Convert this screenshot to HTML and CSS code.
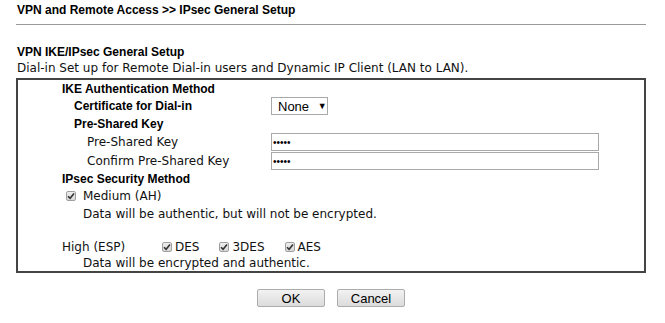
FILE: index.html
```html
<!DOCTYPE html>
<html lang="en">
<head>
    <meta charset="UTF-8">
    <title>IPsec General Setup</title>
    <link rel="stylesheet" href="styles.css">
</head>
<body>
    <div class="page">
        <h1 class="title">VPN and Remote Access &gt;&gt; IPsec General Setup</h1>

        <h2 class="section-title">VPN IKE/IPsec General Setup</h2>
        <div class="desc">Dial-in Set up for Remote Dial-in users and Dynamic IP Client (LAN to LAN).</div>

        <div class="box">
            <div class="row h17"><span class="label l1 bold">IKE Authentication Method</span></div>
            <div class="row h18">
                <span class="label l2 bold">Certificate for Dial-in</span>
                <div class="select">None <span class="arrow">&#9660;</span></div>
            </div>
            <div class="row h18"><span class="label l2 bold">Pre-Shared Key</span></div>
            <div class="row h19 top">
                <span class="label l3">Pre-Shared Key</span>
                <input class="key" type="password" value="12345">
            </div>
            <div class="row h18 top">
                <span class="label l3">Confirm Pre-Shared Key</span>
                <input class="key" type="password" value="12345">
            </div>
            <div class="row h17"><span class="label l1 bold">IPsec Security Method</span></div>
            <div class="row h18 medium">
                <span class="check"><svg width="8" height="8" viewBox="0 0 8 8"><path d="M1 4.2 L3.1 6.3 L7 1.6" fill="none" stroke="#333" stroke-width="1.6"/></svg></span>
                <span>Medium (AH)</span>
            </div>
            <div class="row h17 note">Data will be authentic, but will not be encrypted.</div>
            <div class="row h16"></div>
            <div class="row h17 high">
                <span class="high-label">High (ESP)</span>
                <span class="opt"><span class="check"><svg width="8" height="8" viewBox="0 0 8 8"><path d="M1 4.2 L3.1 6.3 L7 1.6" fill="none" stroke="#333" stroke-width="1.6"/></svg></span>DES</span>
                <span class="opt"><span class="check"><svg width="8" height="8" viewBox="0 0 8 8"><path d="M1 4.2 L3.1 6.3 L7 1.6" fill="none" stroke="#333" stroke-width="1.6"/></svg></span>3DES</span>
                <span class="opt"><span class="check"><svg width="8" height="8" viewBox="0 0 8 8"><path d="M1 4.2 L3.1 6.3 L7 1.6" fill="none" stroke="#333" stroke-width="1.6"/></svg></span>AES</span>
            </div>
            <div class="row h16 note">Data will be encrypted and authentic.</div>
        </div>

        <div class="buttons">
            <button type="button">OK</button>
            <button type="button">Cancel</button>
        </div>
    </div>
</body>
</html>
```

FILE: styles.css
```css
body {
    margin: 0;
    background-color: #fff;
    color: #111;
    font-family: "DejaVu Sans", Verdana, sans-serif;
    font-size: 12px;
}
.page {
    width: 630px;
    margin-left: 16px;
}
.title {
    margin: 0;
    padding: 3px 0 7px 1px;
    font: bold 12px/14px "Liberation Sans", Arial, sans-serif;
    color: #000;
    border-bottom: 1px solid #999;
    width: 629px;
}
.section-title {
    margin: 20px 0 0;
    padding-left: 1px;
    font: bold 12px/15px "Liberation Sans", Arial, sans-serif;
    color: #000;
}
.desc {
    padding-left: 1px;
    line-height: 16px;
    margin-bottom: 2px;
}
.box {
    border: 2px solid #444;
    box-sizing: border-box;
    width: 630px;
}
.row {
    display: flex;
    align-items: center;
}
.row.top {
    align-items: flex-start;
}
.row.top .label {
    line-height: 18px;
}
.h16 { height: 16px; }
.h17 { height: 17px; }
.h18 { height: 18px; }
.h19 { height: 19px; }
.label {
    width: 253px;
    box-sizing: border-box;
    flex: none;
}
.bold {
    font: bold 12px "Liberation Sans", Arial, sans-serif;
    color: #000;
}
.l1 { padding-left: 44px; }
.l2 { padding-left: 56px; }
.l3 { padding-left: 69px; }
.select {
    box-sizing: border-box;
    width: 57px;
    height: 18px;
    border: 1px solid #a9a9a9;
    padding-left: 6px;
    font: 13px/16px "Liberation Sans", Arial, sans-serif;
    color: #000;
}
.arrow {
    font-size: 9px;
    margin-left: 5px;
    vertical-align: 2px;
}
.key {
    box-sizing: border-box;
    width: 328px;
    height: 18px;
    margin: 0;
    padding: 0 1px;
    border: 1px solid #a9a9a9;
    font: 10px "Liberation Sans", Arial, sans-serif;
    color: #000;
}
.check {
    display: inline-flex;
    align-items: center;
    justify-content: center;
    box-sizing: border-box;
    width: 10px;
    height: 10px;
    border: 1px solid #a0a0a0;
    border-radius: 2px;
    background: linear-gradient(#eee, #d8d8d8);
    margin-right: 3px;
}
.medium {
    padding-left: 48px;
}
.medium .check {
    margin-right: 7px;
}
.note {
    padding-left: 65px;
}
.high {
    padding-left: 44px;
}
.high-label {
    width: 100px;
}
.opt {
    display: inline-flex;
    align-items: center;
    margin-right: 20px;
}
.buttons {
    display: flex;
    justify-content: center;
    gap: 12px;
    margin-top: 16px;
}
button {
    width: 68px;
    height: 18px;
    padding: 0;
    border: 1px solid #acacac;
    border-radius: 2px;
    background: linear-gradient(#f2f2f2, #dcdcdc);
    font: 13px "Liberation Sans", Arial, sans-serif;
    color: #000;
}
```
